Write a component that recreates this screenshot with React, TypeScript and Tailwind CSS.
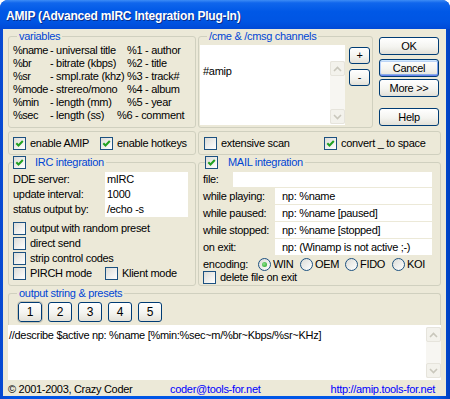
import type { ReactNode } from 'react'
import clsx from 'clsx'

const legendCls = 'leading-[13px] text-[#0046D5]'

function Check({ checked = false }: { checked?: boolean }) {
  return (
    <span className="flex h-[13px] w-[13px] shrink-0 items-center justify-center border border-[#1C5180] bg-[linear-gradient(135deg,#DCDCD7,#FFFFFF)]">
      {checked ? (
        <svg width="9" height="9" viewBox="0 0 9 9">
          <path d="M1.3 4.2 L3.5 6.5 L7.8 2" fill="none" stroke="#21A121" strokeWidth="2" />
        </svg>
      ) : null}
    </span>
  )
}

function CheckItem({ checked, label, className }: { checked?: boolean; label: string; className?: string }) {
  return (
    <label className={clsx('flex h-[13px] items-center gap-[4px] whitespace-nowrap', className)}>
      <Check checked={checked} />
      <span>{label}</span>
    </label>
  )
}

function Radio({ checked = false, label, className }: { checked?: boolean; label: string; className?: string }) {
  return (
    <label className={clsx('flex items-center gap-[2px]', className)}>
      <span className="flex h-[13px] w-[13px] items-center justify-center rounded-full border border-[#1C5180] bg-[linear-gradient(135deg,#DCDCD7,#FFFFFF)]">
        {checked ? <span className="h-[5px] w-[5px] rounded-full bg-[radial-gradient(circle_at_40%_40%,#8CE28C,#1FA11F)]" /> : null}
      </span>
      <span>{label}</span>
    </label>
  )
}

function Button({ children, className, focused }: { children: ReactNode; className?: string; focused?: boolean }) {
  return (
    <button
      type="button"
      className={clsx(
        'flex items-center justify-center rounded-[3px] border border-[#003C74] bg-[linear-gradient(to_bottom,#FFFFFF,#F4F4F0_55%,#E3E1D8)] leading-none text-black',
        focused &&
          'shadow-[inset_0_1px_0_#CEE7FF,inset_0_-1px_0_#6982EE,inset_1px_0_0_#B9D1FA,inset_-1px_0_0_#7B9FEB,inset_0_2px_0_#BCD4F6,inset_0_-2px_0_#89ADE4]',
        className,
      )}
    >
      {children}
    </button>
  )
}

function Arrow({ up }: { up?: boolean }) {
  return (
    <span className="flex h-[15px] w-[15px] items-center justify-center rounded-[2px] border border-[#E6E4DC] bg-[#F3F2EC]">
      <svg width="9" height="6" viewBox="0 0 9 6">
        <path d={up ? 'M1 5 L4.5 1.5 L8 5' : 'M1 1 L4.5 4.5 L8 1'} fill="none" stroke="#C9C7BC" strokeWidth="1.6" />
      </svg>
    </span>
  )
}

function ScrollBar({ className }: { className?: string }) {
  return (
    <div className={clsx('flex w-[15px] shrink-0 flex-col justify-between bg-[#F7F6F2]', className)}>
      <Arrow up />
      <Arrow />
    </div>
  )
}

function Field({ value = '', className }: { value?: string; className?: string }) {
  return <div className={clsx('h-[15px] whitespace-nowrap bg-white leading-[15px]', className)}>{value}</div>
}

const variables = [
  ['%name', '- universal title', '%1 - author'],
  ['%br', '- bitrate (kbps)', '%2 - title'],
  ['%sr', '- smpl.rate (khz)', '%3 - track#'],
  ['%mode', '- strereo/mono', '%4 - album'],
  ['%min', '- length (mm)', '%5 - year'],
  ['%sec', '- length (ss)', '%6 - comment'],
]

const mailRows = [
  ['while playing:', 'np: %name'],
  ['while paused:', 'np: %name [paused]'],
  ['while stopped:', 'np: %name [stopped]'],
  ['on exit:', 'np: (Winamp is not active ;-)'],
]

export default function App() {
  return (
    <div className="h-[399px] w-[450px] overflow-hidden bg-white font-['Liberation_Sans',Arial,sans-serif] text-[11px] tracking-[-0.3px] text-black">
      <div className="flex h-full flex-col rounded-t-[8px] bg-[linear-gradient(to_right,#0848D0,#0055E5_3%,#0058E8_97%,#0040C0)]">
        <div className="flex h-[29px] shrink-0 items-center rounded-t-[8px] bg-[linear-gradient(to_bottom,#3D8CF5_0%,#1066EC_10%,#0058E6_40%,#0055E3_75%,#0049D6_100%)] pl-[6px] pt-[2px]">
          <span className="text-[12px] font-bold tracking-[-0.2px] text-white [text-shadow:1px_1px_#0A2D8A]">
            AMIP (Advanced mIRC Integration Plug-In)
          </span>
        </div>

        <div className="mb-[3px] ml-[3px] mr-[4px] flex flex-1 flex-col bg-[#ECE9D8] px-[5px] pt-[1px]">
          {/* top row */}
          <div className="flex h-[98px]">
            <fieldset className="h-[98px] w-[188px] shrink-0 rounded-[3px] border border-[#D0D0BF]">
              <legend className={clsx('ml-[8px] px-[2px]', legendCls)}>variables</legend>
              <div className="flex flex-col pl-[4px] pt-[1px]">
                {variables.map((row, i) => (
                  <div key={row[0]} className="flex h-[13px] items-center whitespace-nowrap">
                    <span className="w-[37px] tracking-[-0.5px]">{row[0]}</span>
                    <span className={i === 5 ? 'w-[67px]' : 'w-[77px]'}>{row[1]}</span>
                    <span>{row[2]}</span>
                  </div>
                ))}
              </div>
            </fieldset>

            <fieldset className="ml-[2px] h-[98px] w-[175px] shrink-0 rounded-[3px] border border-[#D0D0BF]">
              <legend className={clsx('ml-[8px] px-[2px]', legendCls)}>/cme &amp; /cmsg channels</legend>
              <div className="flex pl-[1px] pt-[2px]">
                <div className="flex h-[80px] w-[145px] bg-white">
                  <div className="flex-1 pl-[3px] pt-[18px]">#amip</div>
                  <ScrollBar className="mb-[1px] mt-[16px]" />
                </div>
                <div className="ml-[4px] flex flex-col pt-[2px]">
                  <Button className="h-[17px] w-[21px]">+</Button>
                  <Button className="mt-[5px] h-[17px] w-[21px]">-</Button>
                </div>
              </div>
            </fieldset>

            <div className="ml-[6px] flex w-[60px] flex-col pt-[7px]">
              <Button className="h-[18px]">OK</Button>
              <Button focused className="mt-[4px] h-[18px]">Cancel</Button>
              <Button className="mt-[2px] h-[18px]">More &gt;&gt;</Button>
              <Button className="mt-[11px] h-[18px]">Help</Button>
            </div>
          </div>

          {/* option row */}
          <div className="mt-[3px] flex h-[24px]">
            <div className="flex w-[188px] items-center rounded-[3px] border border-[#D0D0BF] pl-[4px]">
              <CheckItem checked label="enable AMIP" className="w-[87px]" />
              <CheckItem checked label="enable hotkeys" />
            </div>
            <div className="ml-[2px] flex w-[243px] items-center rounded-[3px] border border-[#D0D0BF] pl-[5px]">
              <CheckItem label="extensive scan" className="w-[120px]" />
              <CheckItem checked label="convert _ to space" />
            </div>
          </div>

          {/* integration row */}
          <div className="mt-[1px] flex h-[130px]">
            <fieldset className="h-[130px] w-[188px] shrink-0 rounded-[3px] border border-[#D0D0BF]">
              <legend className="ml-[4px] flex items-center gap-[9px] pr-[2px] leading-[13px]">
                <Check checked />
                <span className="text-[#0046D5]">IRC integration</span>
              </legend>
              <div className="flex flex-col pl-[4px] pt-[3px]">
                {[
                  ['DDE server:', 'mIRC'],
                  ['update interval:', '1000'],
                  ['status output by:', '/echo -s'],
                ].map(([label, value]) => (
                  <div key={label} className="flex h-[15px] items-center">
                    <span className="w-[92px] whitespace-nowrap">{label}</span>
                    <Field value={value} className="w-[83px] pl-[2px]" />
                  </div>
                ))}
                <div className="mt-[5px] flex flex-col gap-[2px]">
                  <CheckItem label="output with random preset" />
                  <CheckItem label="direct send" />
                  <CheckItem label="strip control codes" />
                  <div className="flex">
                    <CheckItem label="PIRCH mode" className="w-[92px]" />
                    <CheckItem label="Klient mode" />
                  </div>
                </div>
              </div>
            </fieldset>

            <fieldset className="ml-[2px] h-[130px] w-[243px] shrink-0 rounded-[3px] border border-[#D0D0BF]">
              <legend className="ml-[6px] flex items-center gap-[10px] pr-[2px] leading-[13px]">
                <Check checked />
                <span className="text-[#0046D5]">MAIL integration</span>
              </legend>
              <div className="flex flex-col pl-[4px] pr-[8px] pt-[3px]">
                <div className="flex h-[15px] items-center">
                  <span className="w-[30px]">file:</span>
                  <Field className="flex-1" />
                </div>
                <div className="mt-[1px] flex flex-col gap-[1px]">
                  {mailRows.map(([label, value]) => (
                    <div key={label} className="flex h-[16px] items-center">
                      <span className="w-[72px] whitespace-nowrap">{label}</span>
                      <Field value={value} className="h-[16px] flex-1 pl-[7px] leading-[16px]" />
                    </div>
                  ))}
                </div>
                <div className="mt-[3px] flex h-[13px] items-center">
                  <span className="w-[55px]">encoding:</span>
                  <Radio checked label="WIN" className="w-[42px]" />
                  <Radio label="OEM" className="w-[45px]" />
                  <Radio label="FIDO" className="w-[47px]" />
                  <Radio label="KOI" />
                </div>
                <CheckItem label="delete file on exit" />
              </div>
            </fieldset>
          </div>

          {/* output string */}
          <fieldset className="mt-[1px] h-[38px] rounded-t-[3px] border border-b-0 border-[#D0D0BF]">
            <legend className={clsx('ml-[8px] px-[2px]', legendCls)}>output string &amp; presets</legend>
            <div className="flex gap-[6px] pl-[9px] pt-[2px]">
              {['1', '2', '3', '4', '5'].map((n) => (
                <Button
                  key={n}
                  className={clsx(
                    'h-[20px] w-[24px] text-[12px]',
                    n === '1' && 'bg-[linear-gradient(to_bottom,#E6E5DE,#F0EFEA)] outline outline-1 outline-[#C8C5B6]',
                  )}
                >
                  {n}
                </Button>
              ))}
            </div>
          </fieldset>
          <div className="flex h-[55px] bg-white">
            <div className="flex-1 whitespace-nowrap pl-[1px] pt-[2px]">
              //describe $active np: %name [%min:%sec~m/%br~Kbps/%sr~KHz]
            </div>
            <ScrollBar className="my-[2px]" />
          </div>

          {/* footer */}
          <div className="flex h-[16px] items-center whitespace-nowrap pt-[2px]">
            <span className="w-[162px]">© 2001-2003, Crazy Coder</span>
            <span className="text-[#0000FF]">coder@tools-for.net</span>
            <span className="ml-auto mr-[6px] text-[#0000FF]">http://amip.tools-for.net</span>
          </div>
        </div>
      </div>
    </div>
  )
}
